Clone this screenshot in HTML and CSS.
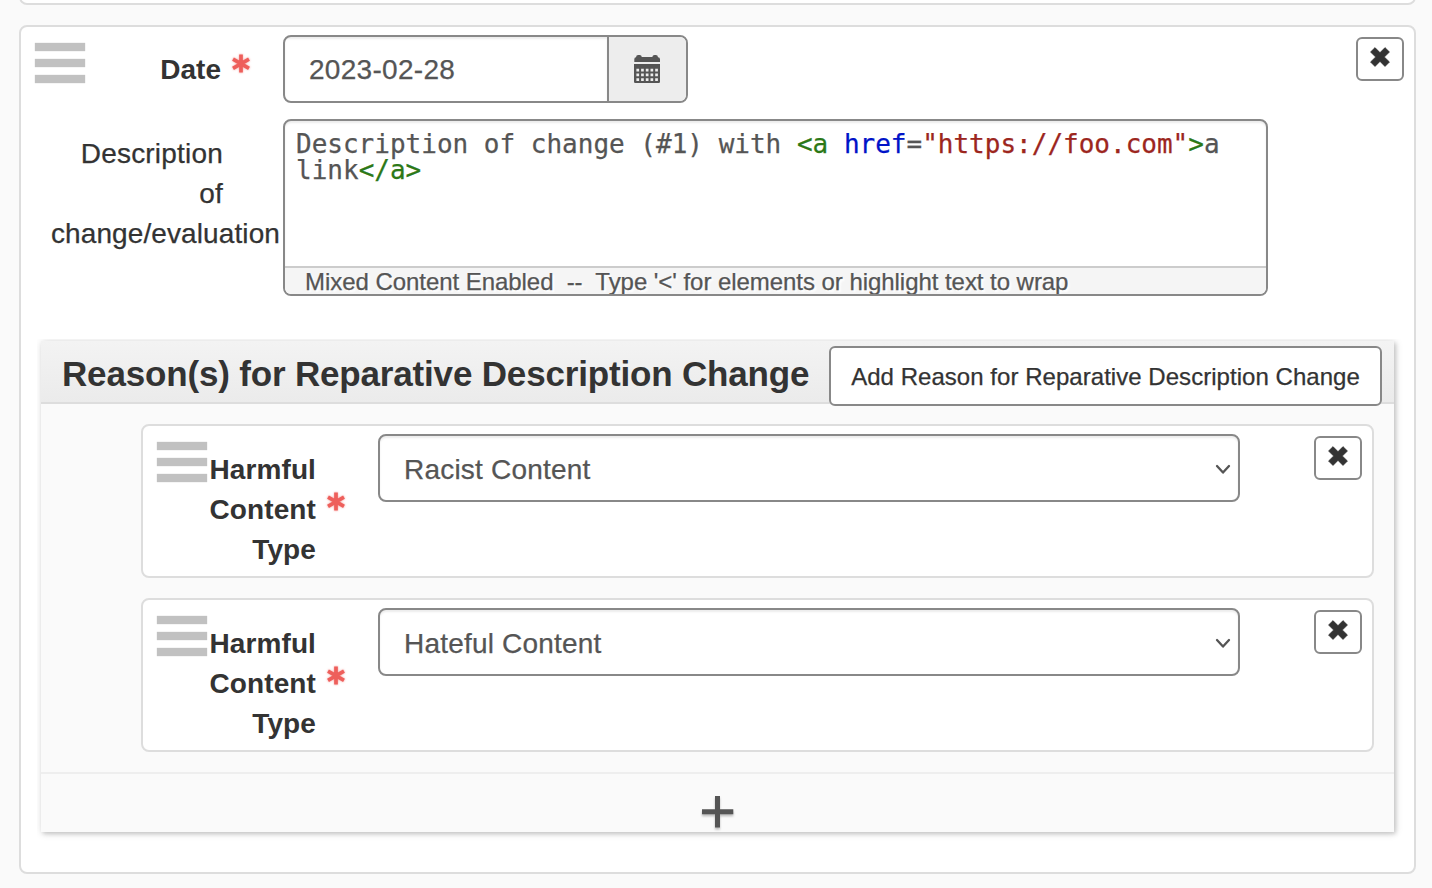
FILE: index.html
```html
<!DOCTYPE html>
<html lang="en">
<head>
<meta charset="utf-8">
<title>Reparative Description</title>
<link rel="stylesheet" href="styles.css">
</head>
<body>
<svg class="defs" width="0" height="0">
  <symbol id="remove" viewBox="0 0 20 20"><path d="M5 0.6 10 5.6 15 0.6 19.5 5 14.4 10 19.5 15 15 19.5 10 14.4 5 19.5 0.5 15 5.6 10 0.5 5Z" fill="#333" stroke="#333" stroke-width=".6" stroke-linejoin="round"/></symbol>
  <symbol id="required" viewBox="0 0 22 22"><path d="M11 1.6V19.4M3 6.2 19 15.3M19 6.2 3 15.3" stroke="#ee5f5b" stroke-width="3.7"/></symbol>
  <symbol id="chevron" viewBox="0 0 16 11"><path d="M2 2 8 8.6 14 2" fill="none" stroke="#555" stroke-width="2.3" stroke-linecap="round" stroke-linejoin="round"/></symbol>
</svg>
<main class="page">
  <section class="card previous"></section>
  <section class="card record">
    <div class="row date-row">
      <span class="handle"><i></i><i></i><i></i></span>
      <label class="label date-label">Date</label>
      <svg class="required"><use href="#required"/></svg>
      <div class="date-group">
        <div class="date-input">2023-02-28</div>
        <button class="calendar">
          <svg width="28" height="30" viewBox="0 0 28 30">
            <path fill="#555" d="M1.3 8V5.2Q1.3 3.4 3 3.2Q3.2 1 5.2 1H6.6Q8.6 1 8.8 3H19.3Q19.6 1 21.5 1H22.8Q24.8 1 25 3.2Q27 3.4 27 5.2V8Z"/>
            <path fill="#555" d="M1 10H27V27.8Q27 29 25.8 29H2.2Q1 29 1 27.8Z"/>
            <g stroke="#ededed" stroke-width="2.7" stroke-dasharray="2.7 2"><path d="M3.4 16.2H25.2M3.4 20.9H25.2M3.4 25.6H25.2"/></g>
          </svg>
        </button>
      </div>
      <button class="remove"><svg><use href="#remove"/></svg></button>
    </div>
    <div class="row description-row">
      <label class="label description-label"><span class="inset">Description</span><span class="inset">of</span><span class="wide">change/evaluation</span></label>
      <div class="editor">
        <pre class="code">Description of change (#1) with <span class="tag">&lt;a</span> <span class="attr">href</span>=<span class="string">"https://foo.com"</span><span class="tag">&gt;</span>a
link<span class="tag">&lt;/a&gt;</span></pre>
        <div class="editor-note">Mixed Content Enabled&nbsp; --&nbsp; Type '&lt;' for elements or highlight text to wrap</div>
      </div>
    </div>
    <section class="panel">
      <header class="panel-header">
        <h3>Reason(s) for Reparative Description Change</h3>
        <button class="add">Add Reason for Reparative Description Change</button>
      </header>
      <div class="panel-body">
        <div class="card reason">
          <span class="handle"><i></i><i></i><i></i></span>
          <label class="label reason-label">Harmful<br>Content<br>Type</label>
          <svg class="required"><use href="#required"/></svg>
          <div class="select"><span>Racist Content</span><svg><use href="#chevron"/></svg></div>
          <button class="remove"><svg><use href="#remove"/></svg></button>
        </div>
        <div class="card reason">
          <span class="handle"><i></i><i></i><i></i></span>
          <label class="label reason-label">Harmful<br>Content<br>Type</label>
          <svg class="required"><use href="#required"/></svg>
          <div class="select"><span>Hateful Content</span><svg><use href="#chevron"/></svg></div>
          <button class="remove"><svg><use href="#remove"/></svg></button>
        </div>
      </div>
      <footer class="panel-footer"><svg width="32" height="32" viewBox="0 0 32 32"><path d="M15.5 0V31.5M0 15.8H31.3" stroke="#555" stroke-width="5"/></svg></footer>
    </section>
  </section>
</main>
</body>
</html>
```

FILE: styles.css
```css
* { box-sizing: border-box; }
html { overflow: hidden; }
body {
  margin: 0;
  height: 888px;
  overflow: hidden;
  background: #fafafa;
  color: #333;
  font-family: "Liberation Sans", Arial, sans-serif;
  font-size: 28px;
  line-height: 40px;
  letter-spacing: .2px;
  -webkit-text-stroke: .25px currentColor;
}
.defs { position: absolute; }
button { margin: 0; padding: 0; font: inherit; letter-spacing: inherit; color: inherit; }
.page { padding: 0 16px 0 19px; }
.card { background: #fff; border: 2px solid #ddd; border-radius: 8px; }
.previous { height: 25px; margin-top: -20px; }
.record { margin-top: 20px; height: 849px; padding: 8px 10px 0 14px; }
.row { display: flex; align-items: flex-start; }
.date-row { height: 84px; }

.handle { display: flex; flex-direction: column; gap: 8px; width: 50px; padding-top: 8px; flex: none; }
.handle i { height: 8px; margin-right: .5px; background: #c1c1c1; box-shadow: 0 0 1px #c1c1c1; }

.label { text-align: right; flex: none; }
.date-label { width: 136px; padding-top: 15px; font-weight: bold; letter-spacing: 0; }
.required { width: 22px; height: 22px; flex: none; filter: drop-shadow(0 0 1px #ee5f5b99); }
.date-row .required { margin: 18px 31px 0 9px; }
.date-group { display: flex; width: 405px; height: 68px; border: 2px solid #888; border-radius: 8px; overflow: hidden; }
.date-input { flex: 1; padding: 13px 24px 11px; color: #555; letter-spacing: .3px; box-shadow: inset 0 2px 2px rgba(0,0,0,.075); }
.calendar { display: flex; align-items: center; justify-content: center; width: 79px; padding-right: 2px; padding-bottom: 1px; border: 0; border-left: 2px solid #888; background: #ededed; }
.remove { display: flex; justify-content: center; width: 48px; height: 44px; margin: 2px 0 0 auto; padding-top: 8px; background: #fff; border: 2px solid #888; border-radius: 6px; }
.remove svg { width: 20px; height: 20px; }

.description-label { display: flex; flex-direction: column; width: 245px; margin-right: 3px; padding-top: 15px; }
.inset { padding-right: 57px; }
.wide { letter-spacing: .1px; }
.editor { display: flex; flex-direction: column; width: 985px; height: 177px; border: 2px solid #888; border-radius: 8px; overflow: hidden; box-shadow: inset 0 2px 2px rgba(0,0,0,.075); }
.code { flex: 1; margin: 0; padding: 10px 9px 0 11px; color: #555; font: 26px/26px "DejaVu Sans Mono", monospace; letter-spacing: 0; }
.tag { color: #2c7817; }
.attr { color: #0013c8; }
.string { color: #9c261e; }
.editor-note { height: 28px; flex: none; padding-left: 20px; overflow: hidden; white-space: nowrap; border-top: 2px solid #ccc; background: #f5f5f5; color: #555; font-size: 24px; line-height: 28px; letter-spacing: -.05px; text-shadow: 2px 2px 2px #fff; }

.panel { width: 1353px; height: 491px; margin: 45px 0 0 6px; background: #fafafa; box-shadow: 1px 1px 8px rgba(0,0,0,.16), 2px 2px 4px rgba(0,0,0,.14); clip-path: inset(-2px -12px -12px -4px); }
.panel-header { display: flex; align-items: flex-start; justify-content: space-between; height: 63px; padding: 5px 12px 0 21px; border-bottom: 2px solid #ddd; background: linear-gradient(#f3f3f3, #ebebeb); }
h3 { margin: 8px 0 0; font-size: 35px; line-height: 40px; letter-spacing: -.17px; white-space: nowrap; -webkit-text-stroke: 0; }
.add { width: 553px; height: 60px; padding-top: 2px; flex: none; border: 2px solid #888; border-radius: 6px; background: #fff; font-size: 24px; letter-spacing: .04px; white-space: nowrap; }
.panel-body { display: flex; flex-direction: column; gap: 20px; height: 368px; padding: 20px 20px 0 100px; }
.reason { display: flex; align-items: flex-start; height: 154px; padding: 8px 10px 0 14px; }
.reason-label { width: 109px; padding-top: 16px; font-weight: bold; letter-spacing: .1px; }
.date-label, .reason-label { -webkit-text-stroke: 0; }
.reason .required { margin: 57px 31px 0 9px; }
.select { display: flex; align-items: center; justify-content: space-between; width: 862px; height: 68px; padding: 3px 7px 0 24px; border: 2px solid #888; border-radius: 8px; background: #fff; color: #555; box-shadow: inset 0 2px 2px rgba(0,0,0,.075); }
.select span { padding-top: 1px; }
.select svg { width: 16px; height: 11px; }
.panel-footer { display: flex; justify-content: center; height: 60px; padding-top: 22px; border-top: 2px solid #eee; }
.panel-footer svg { overflow: visible; filter: drop-shadow(0 2px 1px rgba(0,0,0,.25)); }
```
